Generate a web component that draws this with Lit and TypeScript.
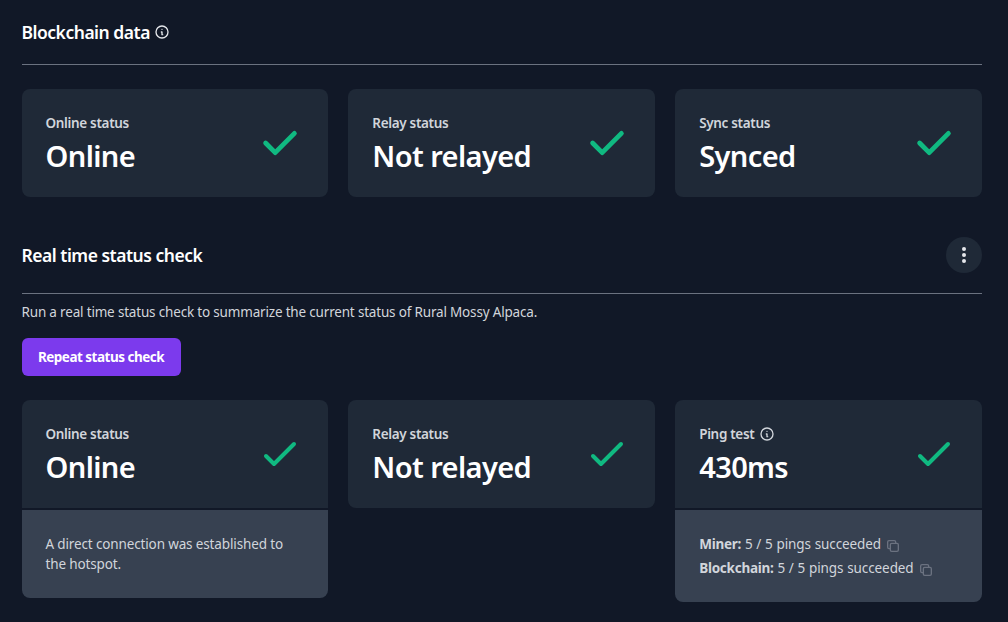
import { LitElement, html, css, nothing } from "lit";
import { customElement, property } from "lit/decorators.js";

const infoIcon = html`<svg class="info" width="16" height="16" viewBox="0 0 24 24" fill="none" stroke="currentColor" stroke-width="2" stroke-linecap="round" stroke-linejoin="round"><path d="M13 16h-1v-4h-1m1-4h.01M21 12a9 9 0 11-18 0 9 9 0 0118 0z"/></svg>`;
const copyIcon = html`<svg class="copy" width="16" height="16" viewBox="0 0 24 24" fill="none" stroke="currentColor" stroke-width="2" stroke-linecap="round" stroke-linejoin="round"><path d="M8 16H6a2 2 0 01-2-2V6a2 2 0 012-2h8a2 2 0 012 2v2m-6 12h8a2 2 0 002-2v-8a2 2 0 00-2-2h-8a2 2 0 00-2 2v8a2 2 0 002 2z"/></svg>`;
const solidCheck = html`<svg class="check" width="48" height="48" viewBox="0 0 20 20" fill="currentColor"><path fill-rule="evenodd" clip-rule="evenodd" d="M16.707 5.293a1 1 0 010 1.414l-8 8a1 1 0 01-1.414 0l-4-4a1 1 0 011.414-1.414L8 12.586l7.293-7.293a1 1 0 011.414 0z"/></svg>`;
const outlineCheck = html`<svg class="check" width="48" height="48" viewBox="0 0 24 24" fill="none" stroke="currentColor" stroke-width="2" stroke-linecap="round" stroke-linejoin="round"><path d="M5 13l4 4L19 7"/></svg>`;

@customElement("status-card")
class StatusCard extends LitElement {
  @property() label = "";
  @property() value = "";
  @property({ type: Boolean }) info = false;
  @property({ type: Boolean }) outline = false;
  @property({ type: Boolean }) details = false;

  static styles = css`
    :host { display: block; min-width: 0; }
    .card { display: flex; flex-direction: column; gap: 2px; border-radius: 8px; overflow: hidden; }
    .main { display: flex; align-items: center; justify-content: space-between; height: 60px; padding: 24px; background: #1f2937; }
    .text { display: flex; flex-direction: column; gap: 4px; }
    .label { display: flex; align-items: center; gap: 4.5px; font-size: 13.5px; line-height: 20px; font-weight: 600; letter-spacing: -0.33px; color: #d1d5db; }
    .value { font-size: 29px; line-height: 38px; height: 36px; font-weight: 600; letter-spacing: -0.6px; color: #fff; white-space: nowrap; }
    .check { display: block; color: #10b981; }
    .info { display: block; }
    .details { padding: 24px; background: #374151; color: #d1d5db; font-size: 13.5px; line-height: 20px; letter-spacing: -0.14px; }
  `;

  render() {
    return html`<div class="card">
      <div class="main">
        <div class="text">
          <div class="label"><span>${this.label}</span>${this.info ? infoIcon : nothing}</div>
          <div class="value">${this.value}</div>
        </div>
        ${this.outline ? outlineCheck : solidCheck}
      </div>
      ${this.details ? html`<div class="details"><slot></slot></div>` : nothing}
    </div>`;
  }
}

@customElement("app-root")
class AppRoot extends LitElement {
  static styles = css`
    :host { display: block; box-sizing: border-box; min-height: 100vh; padding: 0 26px 0 21.5px; background: #111827; color: #d1d5db; font-family: "Noto Sans", "Open Sans", sans-serif; overflow: hidden; }
    .head { display: flex; align-items: center; height: 64px; border-bottom: 1px solid #6b7280; gap: 4.5px; color: #fff; }
    .head.second { height: 76px; justify-content: space-between; margin-top: 20px; }
    h2 { margin: 0; font-size: 17.5px; line-height: 28px; font-weight: 600; letter-spacing: -0.49px; }
    .info { display: block; color: #e5e7eb; }
    .grid { display: grid; grid-template-columns: repeat(3, minmax(0, 1fr)); gap: 20px; align-items: start; margin-top: 24px; }
    .more { display: flex; align-items: center; justify-content: center; width: 36px; height: 36px; padding: 0; border: 0; border-radius: 50%; background: #1f2937; color: #e5e7eb; }
    p { margin: 8px 0 0; font-size: 13.5px; line-height: 20px; letter-spacing: -0.18px; }
    .repeat { display: block; margin-top: 16px; width: 159px; height: 38px; padding: 0; border: 0; border-radius: 6px; background: #7c3aed; color: #fff; font: 700 13.5px/20px "Noto Sans", sans-serif; letter-spacing: -0.5px; }
    .ping { display: flex; align-items: center; height: 20px; white-space: nowrap; gap: 4px; letter-spacing: -0.1px; word-spacing: 0.4px; }
    .ping + .ping { margin-top: 4px; }
    b { font-weight: 700; letter-spacing: -0.25px; }
    .copy { display: block; color: #6b7280; margin-top: 4px; }
  `;

  render() {
    return html`
      <div class="head"><h2>Blockchain data</h2>${infoIcon}</div>
      <div class="grid">
        <status-card label="Online status" value="Online"></status-card>
        <status-card label="Relay status" value="Not relayed"></status-card>
        <status-card label="Sync status" value="Synced"></status-card>
      </div>
      <div class="head second">
        <h2>Real time status check</h2>
        <button class="more" aria-label="Options"><svg width="20" height="20" viewBox="0 0 20 20" fill="currentColor"><circle cx="10" cy="4" r="2"/><circle cx="10" cy="10" r="2"/><circle cx="10" cy="16" r="2"/></svg></button>
      </div>
      <p>Run a real time status check to summarize the current status of Rural Mossy Alpaca.</p>
      <button class="repeat">Repeat status check</button>
      <div class="grid">
        <status-card outline details label="Online status" value="Online">A direct connection was established to the hotspot.</status-card>
        <status-card outline label="Relay status" value="Not relayed"></status-card>
        <status-card outline details info label="Ping test" value="430ms">
          <div class="ping"><span><b>Miner:</b> 5 / 5 pings succeeded</span>${copyIcon}</div>
          <div class="ping"><span><b>Blockchain:</b> 5 / 5 pings succeeded</span>${copyIcon}</div>
        </status-card>
      </div>`;
  }
}
